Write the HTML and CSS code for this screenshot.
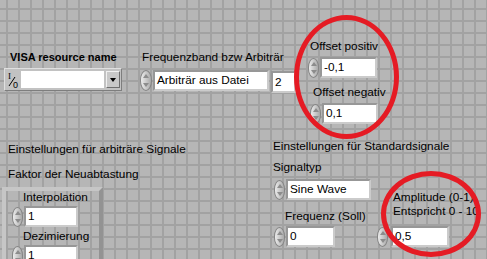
FILE: index.html
```html
<!DOCTYPE html>
<html lang="de">
<head>
    <meta charset="UTF-8">
    <title>Signalgenerator</title>
    <link rel="stylesheet" href="styles.css">
</head>
<body>
    <div class="panel">
        <div class="item caption bold visa-caption">VISA resource name</div>
        <div class="item visa">
            <svg class="io" width="13" height="18" viewBox="0 0 13 18">
                <text x="1" y="8" font-family="Liberation Serif, serif" font-size="9">I</text>
                <line x1="2" y1="15" x2="8" y2="6" stroke="#000" stroke-width="1"/>
                <text x="6" y="17" font-family="Liberation Sans, sans-serif" font-size="9">0</text>
            </svg>
            <span class="field visa-field"></span>
            <span class="drop"></span>
        </div>

        <div class="item caption band-caption">Frequenzband bzw Arbiträr</div>
        <div class="item ctl band">
            <span class="incdec"></span>
            <span class="field w-112">Arbiträr aus Datei</span>
        </div>
        <div class="item field plain band-nr">2</div>

        <div class="item caption offpos-caption">Offset positiv</div>
        <div class="item ctl offpos">
            <span class="incdec"></span>
            <span class="field w-53">-0,1</span>
        </div>
        <div class="item caption offneg-caption">Offset negativ</div>
        <div class="item ctl offneg">
            <span class="incdec"></span>
            <span class="field w-52">0,1</span>
        </div>

        <div class="item caption arb-caption">Einstellungen für arbiträre Signale</div>
        <div class="item caption resample-caption">Faktor der Neuabtastung</div>
        <div class="item cluster">
            <div class="caption sub">Interpolation</div>
            <div class="ctl">
                <span class="incdec"></span>
                <span class="field w-50">1</span>
            </div>
            <div class="caption sub">Dezimierung</div>
            <div class="ctl">
                <span class="incdec"></span>
                <span class="field w-50">1</span>
            </div>
        </div>

        <div class="item caption std-caption">Einstellungen für Standardsignale</div>
        <div class="item caption type-caption">Signaltyp</div>
        <div class="item ctl type">
            <span class="incdec"></span>
            <span class="field w-81">Sine Wave</span>
        </div>
        <div class="item caption freq-caption">Frequenz (Soll)</div>
        <div class="item ctl freq">
            <span class="incdec"></span>
            <span class="field w-45">0</span>
        </div>
        <div class="item caption amp-caption">Amplitude (0-1)<br>Entspricht 0 - 10 %</div>
        <div class="item ctl amp">
            <span class="incdec"></span>
            <span class="field w-54">0,5</span>
        </div>

        <div class="mark mark-offset"></div>
        <div class="mark mark-amp"></div>
    </div>
</body>
</html>
```

FILE: styles.css
```css
body{
    margin: 0;
    font-family: "Liberation Sans", Arial, sans-serif;
    font-size: 11.8px;
    color: #000;
    background-color: #b6b6b6;
}
.panel{
    position: relative;
    width: 487px;
    height: 259px;
    overflow: hidden;
    background-color: #b6b6b6;
    background-image:
        linear-gradient(to right, #a2a2a2 2px, transparent 2px),
        linear-gradient(to bottom, #a2a2a2 2px, transparent 2px);
    background-size: 12px 12px;
    background-position: 6px 8px;
}
.item{
    position: absolute;
}
.caption{
    white-space: nowrap;
    line-height: 14px;
}
.bold{
    font-weight: bold;
    font-size: 11px;
}

/* numeric / ring controls */
.ctl{
    display: flex;
    align-items: center;
}
.incdec{
    position: relative;
    flex: none;
    width: 11px;
    height: 20px;
    box-sizing: border-box;
    border: 1px solid #858585;
    border-radius: 6px / 10px;
    background: linear-gradient(to right, #ececec, #c4c4c4 60%, #a9a9a9);
}
.incdec::before, .incdec::after{
    content: "";
    position: absolute;
    left: 2px;
    border-left: 3px solid transparent;
    border-right: 3px solid transparent;
}
.incdec::before{
    top: 3px;
    border-bottom: 4px solid #8c8c8c;
}
.incdec::after{
    bottom: 3px;
    border-top: 4px solid #8c8c8c;
}
.field{
    display: block;
    height: 17px;
    line-height: 17px;
    padding-left: 2px;
    box-sizing: content-box;
    background: #fff;
    border: 2px solid;
    border-color: #979797 #cbcbcb #cbcbcb #979797;
    white-space: nowrap;
    overflow: hidden;
}
.ctl .field{
    margin-left: 1px;
}
.w-112{ width: 110px; }
.w-81{ width: 79px; }
.w-54{ width: 52px; }
.w-53{ width: 51px; }
.w-52{ width: 50px; }
.w-50{ width: 48px; }
.w-45{ width: 43px; }

/* VISA resource */
.visa-caption{ left: 10px; top: 50px; }
.visa{
    left: 4px;
    top: 68px;
    width: 118px;
    height: 23px;
    box-sizing: border-box;
    display: flex;
    align-items: center;
    padding: 2px 1px 2px 2px;
    background: #c2c2c2;
    border: 1px solid;
    border-color: #e0e0e0 #7e7e7e #7e7e7e #e0e0e0;
}
.io{
    flex: none;
    margin-right: 1px;
}
.visa-field{
    width: 83px;
    height: 17px;
    border: 0;
    padding: 0 0 0 2px;
}
.drop{
    position: relative;
    flex: none;
    width: 14px;
    height: 17px;
    margin-left: 2px;
    box-sizing: border-box;
    background: #c8c8c8;
    border: 1px solid;
    border-color: #f0f0f0 #6e6e6e #6e6e6e #f0f0f0;
}
.drop::after{
    content: "";
    position: absolute;
    left: 3px;
    top: 6px;
    border-left: 3px solid transparent;
    border-right: 3px solid transparent;
    border-top: 4px solid #000;
}

/* Frequenzband */
.band-caption{ left: 142px; top: 50px; }
.band{ left: 140px; top: 70px; }
.band .incdec{ width: 12px; height: 21px; }
.band-nr{
    left: 271px;
    top: 71px;
    width: 19px;
    height: 18px;
    line-height: 18px;
}

/* Offsets */
.offpos-caption{ left: 310px; top: 39px; }
.offpos{ left: 308px; top: 57px; }
.offneg-caption{ left: 313px; top: 85px; }
.offneg{ left: 310px; top: 103px; }

/* arbitrary signals */
.arb-caption{ left: 8px; top: 142px; }
.resample-caption{ left: 8px; top: 167px; }
.cluster{
    left: 2px;
    top: 187px;
    width: 87px;
    height: 90px;
    padding: 0 0 0 6px;
    border: 4px solid;
    border-color: #c6c6c6 #939393 #939393 #c6c6c6;
    display: flex;
    flex-direction: column;
    gap: 2px;
}
.cluster .sub{
    margin-left: 11px;
}
.cluster .caption:first-child{
    margin-top: -1px;
}

/* standard signals */
.std-caption{ left: 273px; top: 139px; }
.type-caption{ left: 273px; top: 160px; }
.type{ left: 274px; top: 179px; }
.freq-caption{ left: 285px; top: 209px; }
.freq{ left: 274px; top: 226px; }
.amp-caption{
    left: 393px;
    top: 190px;
    width: 85px;
    overflow: hidden;
}
.amp{ left: 377px; top: 226px; }
.amp .field{ margin-left: 3px; }

/* red hand drawn marks */
.mark{
    position: absolute;
    box-sizing: border-box;
    border: 5px solid #e51b24;
    border-radius: 50%;
}
.mark-offset{
    left: 294px;
    top: 15px;
    width: 105px;
    height: 124px;
}
.mark-amp{
    left: 381px;
    top: 171px;
    width: 100px;
    height: 86px;
}
```
